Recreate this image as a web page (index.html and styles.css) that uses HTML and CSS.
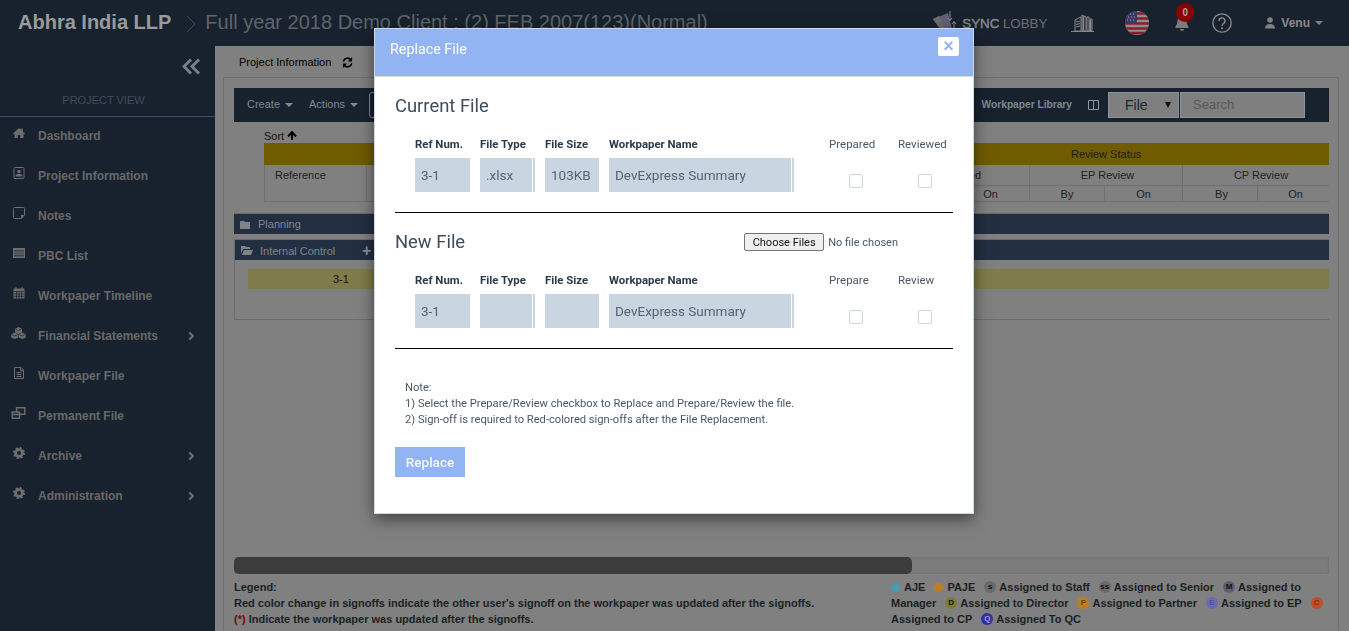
FILE: index.html
```html
<!DOCTYPE html>
<html lang="en">
<head>
<meta charset="utf-8">
<title>Replace File</title>
<link rel="stylesheet" href="styles.css">
</head>
<body>
<div class="app">
  <header class="topbar">
    <span class="brand">Abhra India LLP</span>
    <svg class="crumb" width="10" height="18" viewBox="0 0 10 18"><path d="M1 1l8 8-8 8" fill="none" stroke="#3d4650" stroke-width="1"/></svg>
    <span class="project">Full year 2018 Demo Client : (2) FEB 2007(123)(Normal)</span>
    <div class="top-right">
      <svg class="lobby-icon" width="27" height="22" viewBox="0 0 27 22"><path d="M0 8l10 14h10L15 2z" fill="#625f78"/><path d="M0 8l6-3 8 17h-4z" fill="#6e6e6e"/><path d="M17 0v9M15 7l2 2.500L19 7M21 20V11M19 13l2-2.500L23 13" fill="none" stroke="#8a8a8a" stroke-width="1"/></svg>
      <span class="lobby"><b>SYNC</b> LOBBY</span>
      <svg class="bld" width="23" height="20" viewBox="0 0 23 20"><path d="M0 18.500h23" stroke="#848484"/><path d="M4 18V7l6-3v14zM11 18V2l4 2v14zM16 18V4h2v14zM19 18V6h2v12z" fill="none" stroke="#8a8a8a"/><path d="M12.500 3v15M19.500 7v11" stroke="#8a8a8a" stroke-width="1.500"/><path d="M5 9l4-1M5 11.500l4-1M5 14l4-1" stroke="#8a8a8a"/></svg>
      <svg class="flag" width="24" height="24" viewBox="0 0 24 24"><defs><clipPath id="fc"><circle cx="12" cy="12" r="12"/></clipPath></defs><g clip-path="url(#fc)"><rect width="24" height="24" fill="#8d8d90"/><path d="M0 2.500h24M0 7.500h24M0 12.500h24M0 17.500h24M0 22h24" stroke="#8a1c2c" stroke-width="2.300"/><rect width="12" height="12" fill="#3a3a66"/><path d="M2 3h1M5 3h1M8 3h1M3 6h1M6 6h1M9 6h1M2 9h1M5 9h1M8 9h1" stroke="#a0a0b0" stroke-width="1"/></g></svg>
      <span class="bell-wrap">
        <svg width="14" height="16" viewBox="0 0 14 16"><path d="M7 1a4.500 4.500 0 0 0-4.500 4.500c0 4-2 5.500-2 6.500v1h13v-1c0-1-2-2.500-2-6.500A4.500 4.500 0 0 0 7 1zM5 14a2 2 0 0 0 4 0z" fill="#7c7c7c"/></svg>
        <span class="badge">0</span>
      </span>
      <svg class="help" width="20" height="20" viewBox="0 0 20 20"><circle cx="10" cy="10" r="9.200" fill="none" stroke="#8a8a8a" stroke-width="1.300"/><path d="M7 8a3 3 0 1 1 4.500 2.500c-1 .6-1.500 1-1.500 2.500" fill="none" stroke="#8a8a8a" stroke-width="1.400"/><circle cx="10" cy="15.300" r="1" fill="#8a8a8a"/></svg>
      <span class="user">
        <svg width="10" height="12" viewBox="0 0 10 12"><circle cx="5" cy="3" r="2.800" fill="#808080"/><path d="M0 11.500c0-3 2-4.500 5-4.500s5 1.500 5 4.500z" fill="#808080"/></svg>
        <span>Venu</span><i class="caret caret-user"></i>
      </span>
    </div>
  </header>

  <div class="layout">
    <aside class="sidebar">
      <div class="collapse">
        <svg width="19" height="17" viewBox="0 0 19 17"><path d="M9 1.500L2 8.500l7 7M17 1.500l-7 7 7 7" fill="none" stroke="#7b7f84" stroke-width="3"/></svg>
      </div>
      <div class="view-title">PROJECT VIEW</div>
      <nav class="nav">
        <a class="nav-item"><svg class="ni" viewBox="0 0 12 12"><path d="M6 1L0 6.500l.7.800L1.500 6.600V11h3.300V8h2.400v3h3.300V6.600l.8.700.7-.8-2-1.800V1.500H8.500v1.200z" fill="#6d6d6d"/></svg><span>Dashboard</span></a>
        <a class="nav-item"><svg class="ni" viewBox="0 0 12 12"><rect x="1" y="0.500" width="10" height="11" rx="1" fill="none" stroke="#6d6d6d"/><circle cx="6" cy="4.500" r="1.800" fill="#6d6d6d"/><path d="M2.500 9.500c0-2 1.500-2.800 3.500-2.800s3.500.8 3.500 2.800z" fill="#6d6d6d"/></svg><span>Project Information</span></a>
        <a class="nav-item"><svg class="ni" viewBox="0 0 12 12"><path d="M1.500.5h9a1 1 0 0 1 1 1V8l-3 3.500h-7a1 1 0 0 1-1-1v-9a1 1 0 0 1 1-1z" fill="none" stroke="#6d6d6d"/><path d="M8 8h3.500L8 11.500z" fill="#6d6d6d"/></svg><span>Notes</span></a>
        <a class="nav-item"><svg class="ni" viewBox="0 0 12 12"><rect x="0" y="1" width="12" height="10" fill="#6d6d6d"/><rect x="1" y="3" width="10" height="6.500" fill="#3a424c"/><path d="M1 5h10M1 7.200h10" stroke="#6d6d6d"/></svg><span>PBC List</span></a>
        <a class="nav-item"><svg class="ni" viewBox="0 0 12 12"><rect x="0.500" y="1.500" width="11" height="10" fill="#6d6d6d"/><path d="M3 0v3M9 0v3" stroke="#6d6d6d"/><path d="M1 4.500h10M3.500 4.500v6.500M6 4.500v6.500M8.500 4.500v6.500M1 7h10M1 9.300h10" stroke="#18222e" stroke-width=".7"/></svg><span>Workpaper Timeline</span></a>
        <a class="nav-item"><svg class="ni wide" viewBox="0 0 15 12"><path d="M7.500 0l3.500 1.700v3.500L7.500 7 4 5.200V1.700zM3.700 5.500l3.500 1.700v3.300L3.700 12 .2 10.500V7.200zM11.300 5.500l3.500 1.700v3.300L11.300 12l-3.500-1.500V7.200z" fill="#6d6d6d"/><path d="M4.500 2l3 1.500 3-1.500M.7 7.500l3 1.500 3-1.500M8.300 7.500l3 1.500 3-1.500" fill="none" stroke="#18222e" stroke-width=".7"/></svg><span class="grow">Financial Statements</span><i class="chev"></i></a>
        <a class="nav-item"><svg class="ni" viewBox="0 0 12 12"><path d="M1.500.5H8l2.500 2.500v8.500h-9z" fill="none" stroke="#6d6d6d"/><path d="M7.500 .5V3.500h3" fill="none" stroke="#6d6d6d"/><path d="M3.500 5.500h5M3.500 7.500h5M3.500 9.500h5" stroke="#6d6d6d"/></svg><span>Workpaper File</span></a>
        <a class="nav-item"><svg class="ni wide" viewBox="0 0 14 12"><path d="M5 5V.7h8.300v6.500H8M.7 5h7.300v6.300H.7zM.7 7.500H8" fill="none" stroke="#6d6d6d" stroke-width="1.400"/></svg><span>Permanent File</span></a>
        <a class="nav-item"><svg class="ni" viewBox="0 0 12 12"><circle cx="6" cy="6" r="3.400" fill="none" stroke="#6d6d6d" stroke-width="2.800"/><circle cx="6" cy="6" r="5" fill="none" stroke="#6d6d6d" stroke-width="2" stroke-dasharray="2 1.930"/></svg><span class="grow">Archive</span><i class="chev"></i></a>
        <a class="nav-item"><svg class="ni" viewBox="0 0 12 12"><circle cx="6" cy="6" r="3.400" fill="none" stroke="#6d6d6d" stroke-width="2.800"/><circle cx="6" cy="6" r="5" fill="none" stroke="#6d6d6d" stroke-width="2" stroke-dasharray="2 1.930"/></svg><span class="grow">Administration</span><i class="chev"></i></a>
      </nav>
    </aside>

    <main class="main">
      <div class="page-title">
        <span>Project Information</span>
        <svg width="11" height="11" viewBox="0 0 12 12"><path d="M1.500 5A4.600 4.600 0 0 1 10 3.500M10.500 7A4.600 4.600 0 0 1 2 8.500" fill="none" stroke="#000" stroke-width="1.700"/><path d="M11 0v5H6.500zM1 12V7h4.500z" fill="#000"/></svg>
      </div>
      <section class="panel">
        <div class="toolbar">
          <span class="tool">Create<i class="caret"></i></span>
          <span class="tool">Actions<i class="caret"></i></span>
          <span class="tool-box"></span>
          <span class="tool-lib">Workpaper Library</span>
          <svg class="cols" width="11" height="10" viewBox="0 0 11 10"><path d="M.5.500h10v9H.5zM5.500.500v9" fill="none" stroke="#8f979f"/></svg>
          <span class="select">File<i class="sel-arrow"></i></span>
          <span class="search">Search</span>
        </div>
        <div class="sort">Sort <svg width="10" height="9" viewBox="0 0 10 9"><path d="M5 9V2M1 5.500L5 1l4 4.500" fill="none" stroke="#000" stroke-width="1.900"/></svg></div>
        <div class="wp-table">
          <div class="band">Review Status</div>
          <div class="cell refcell">Reference</div>
          <div class="cell midcell"></div>
          <div class="cell g2 g-rev">Reviewed</div>
          <div class="cell g2 g-ep">EP Review</div>
          <div class="cell g2 g-cp last">CP Review</div>
          <div class="cell sm">By</div><div class="cell sm">On</div>
          <div class="cell sm">By</div><div class="cell sm">On</div>
          <div class="cell sm by-cp">By</div><div class="cell sm on-cp last">On</div>
        </div>
        <div class="group-bar first-bar">
          <svg width="10" height="9" viewBox="0 0 10 9"><path d="M0 1h4l1 1h5v7H0z" fill="#7f8387"/></svg>
          <span>Planning</span>
        </div>
        <div class="group">
          <div class="group-bar inner-bar">
            <svg width="12" height="9" viewBox="0 0 12 9"><path d="M0 0h4l1 1h4v2H2L0 8zM3 4h9l-2 5H1z" fill="#7f8387"/></svg>
            <span class="grow-label">Internal Control</span>
            <b class="plus">+</b>
          </div>
          <div class="yellow-row"><span>3-1</span></div>
        </div>
        <div class="hscroll"><div class="thumb"></div></div>
        <div class="legend">
          <div class="legend-left">
            <div>Legend:</div>
            <div>Red color change in signoffs indicate the other user's signoff on the workpaper was updated after the signoffs.</div>
            <div><span class="red">(*)</span> Indicate the workpaper was updated after the signoffs.</div>
          </div>
          <div class="legend-right">
            <div class="lg-line">
              <i class="dot aje"></i><span class="lg-t">AJE</span>
              <i class="dot paje"></i><span class="lg-t">PAJE</span>
              <i class="lt l-s">s</i><span class="lg-t">Assigned to Staff</span>
              <i class="lt l-s">ss</i><span class="lg-t">Assigned to Senior</span>
              <i class="lt l-m">M</i><span class="lg-t">Assigned to</span>
            </div>
            <div class="lg-line">
              <span class="lg-t">Manager</span>
              <i class="lt l-d">D</i><span class="lg-t">Assigned to Director</span>
              <i class="lt l-p">P</i><span class="lg-t">Assigned to Partner</span>
              <i class="lt l-e">E</i><span class="lg-t">Assigned to EP</span>
              <i class="lt l-c">C</i>
            </div>
            <div class="lg-line">
              <span class="lg-t">Assigned to CP</span>
              <i class="lt l-q">Q</i><span class="lg-t">Assigned To QC</span>
            </div>
          </div>
        </div>
      </section>
    </main>
  </div>
</div>

<div class="modal">
  <div class="modal-head">
    <span>Replace File</span>
    <button class="close" type="button">×</button>
  </div>
  <div class="modal-body">
    <h4 class="sec-title">Current File</h4>
    <div class="file-grid">
      <label class="lb">Ref Num.</label><label class="lb">File Type</label><label class="lb">File Size</label><label class="lb">Workpaper Name</label>
      <label class="lc">Prepared</label><label class="lc">Reviewed</label>
      <div class="inp">3-1</div><div class="inp edge">.xlsx</div><div class="inp">103KB</div><div class="inp edge">DevExpress Summary</div>
      <div class="chk-cell"><span class="chk"></span></div><div class="chk-cell"><span class="chk"></span></div>
    </div>
    <hr class="rule">
    <div class="new-head">
      <h4 class="sec-title">New File</h4>
      <div class="file-pick"><button class="choose" type="button">Choose Files</button><span>No file chosen</span></div>
    </div>
    <div class="file-grid">
      <label class="lb">Ref Num.</label><label class="lb">File Type</label><label class="lb">File Size</label><label class="lb">Workpaper Name</label>
      <label class="lc">Prepare</label><label class="lc">Review</label>
      <div class="inp">3-1</div><div class="inp edge"></div><div class="inp"></div><div class="inp edge">DevExpress Summary</div>
      <div class="chk-cell"><span class="chk"></span></div><div class="chk-cell"><span class="chk"></span></div>
    </div>
    <hr class="rule">
    <div class="note">
      <div>Note:</div>
      <div>1) Select the Prepare/Review checkbox to Replace and Prepare/Review the file.</div>
      <div>2) Sign-off is required to Red-colored sign-offs after the File Replacement.</div>
    </div>
    <button class="replace" type="button">Replace</button>
  </div>
</div>
</body>
</html>
```
FILE: styles.css
```css
* { box-sizing: border-box; }
html, body { margin: 0; height: 100%; overflow: hidden; }
body { font-family: "Liberation Sans", Arial, sans-serif; background: #808080; color: #1c1c1c; }
i { font-style: normal; }

.app { height: 631px; display: flex; flex-direction: column; }

.topbar { height: 46px; flex: none; background: #18222e; display: flex; align-items: center; padding-left: 18px; white-space: nowrap; }
.brand { font-size: 20px; font-weight: 700; color: #9a9a9a; margin-bottom: 2px; }
.crumb { margin: 2px 9px 0 15px; }
.project { font-size: 20px; color: #5e646a; margin-bottom: 2px; }
.top-right { margin-left: auto; display: flex; align-items: center; padding-right: 26px; }
.lobby-icon { margin: -2px 2px 0 0; }
.lobby { font-size: 13.300px; color: #6e6e6e; width: 85px; }
.lobby b { color: #8a8a8a; font-weight: 400; -webkit-text-stroke: .4px #8a8a8a; }
.bld { margin: 0 0 0 24px; }
.flag { margin-left: 31px; }
.bell-wrap { position: relative; margin-left: 26px; width: 14px; height: 16px; }
.badge { position: absolute; left: 1px; top: -12px; width: 18px; height: 19px; border-radius: 50%; background: #8a0000; color: #b0a0a0; font-size: 10px; font-weight: 700; text-align: center; line-height: 19px; }
.help { margin-left: 23px; }
.user { display: flex; align-items: center; margin-left: 33px; font-size: 12px; font-weight: 700; color: #8a8a8a; }
.user span { margin-left: 6px; }
.caret { display: inline-block; margin-left: 5px; border: 4px solid transparent; border-top-color: #808a94; border-bottom: 0; vertical-align: middle; }
.caret-user { border-top-color: #808080; }

.layout { flex: 1; display: flex; min-height: 0; }
.sidebar { width: 215px; flex: none; background: #18222e; }
.collapse { height: 32px; display: flex; justify-content: flex-end; padding: 12px 14px 0 0; }
.view-title { height: 39px; border-bottom: 1px solid #3d4f63; font-size: 11px; color: #3e4c5c; text-align: center; padding: 16px 8px 0 0; margin-bottom: -1px; }
.nav { display: flex; flex-direction: column; }
.nav-item { height: 40px; display: flex; align-items: center; padding: 0 20px 0 13px; font-size: 12px; font-weight: 700; color: #686868; }
.ni { width: 12px; height: 12px; margin: -6px 13px 0 0; flex: none; }
.ni.wide { width: 15px; margin: -6px 12px 0 -2px; }
.grow { flex: 1; }
.chev { width: 6px; height: 6px; border-top: 2px solid #6d6d6d; border-right: 2px solid #6d6d6d; transform: rotate(45deg); margin-right: 2px; }

.main { flex: 1; min-width: 0; padding: 0 10px 0 8px; display: flex; flex-direction: column; }
.page-title { height: 31px; flex: none; display: flex; align-items: center; padding: 1px 0 0 16px; font-size: 11px; color: #000; }
.page-title svg { margin-left: 11px; }
.panel { flex: 1; min-height: 0; border: 1px solid #6e6e6e; border-bottom: 0; padding: 10px 9px 0 10px; display: flex; flex-direction: column; overflow: hidden; }

.toolbar { height: 34px; flex: none; background: #18222e; display: flex; align-items: center; padding-left: 13px; font-size: 11px; color: #7d8893; }
.tool { margin: 0 16px 2px 0; white-space: nowrap; }
.tool-box { width: 20px; height: 26px; border: 1px solid #7d8893; border-radius: 3px; margin-left: -5px; }
.tool-lib { margin: 0 0 2px auto; font-weight: 700; font-size: 10.200px; }
.cols { margin-left: 16px; }
.select { width: 71px; height: 26px; margin-left: 9px; background: #7f7f7f; border: 1px solid #8b9299; color: #202830; font-size: 14px; line-height: 24px; padding-left: 16px; position: relative; }
.sel-arrow { position: absolute; right: 7px; top: 9px; border: 3.500px solid transparent; border-top: 6px solid #111; border-bottom: 0; }
.search { width: 125px; height: 26px; margin: 0 24px 0 1px; background: #7f7f7f; border: 1px solid #8b9299; color: #555a5f; font-size: 13px; line-height: 24px; padding-left: 12px; }

.sort { height: 21px; flex: none; padding: 9px 0 0 30px; font-size: 11px; line-height: 11px; color: #111; white-space: nowrap; }
.wp-table { flex: none; margin-left: 30px; display: grid; grid-template-columns: 103px 510px 75px 78px 75px 78px 75px 71px; grid-template-rows: 22px 21px 16px; font-size: 11px; color: #222; }
.band { grid-column: 1 / -1; background: #6f5c00; color: #1e1e10; line-height: 22px; padding-left: 807px; }
.cell { border-right: 1px solid #707070; border-bottom: 1px solid #707070; text-align: center; line-height: 20px; }
.refcell { grid-row: 2 / 4; text-align: left; padding-left: 10px; line-height: 21px; border-left: 1px solid #707070; }
.midcell { grid-row: 2 / 4; }
.g2 { grid-column: span 2; }
.sm { line-height: 17px; }
.last { border-right: 0; }
.g-rev { padding-left: 8px; }
.g-ep { padding-left: 3px; }
.g-cp { padding-left: 10px; }
.by-cp { padding-left: 3px; }
.on-cp { padding-left: 4px; }

.group-bar { height: 21px; flex: none; background: #222f40; border-top: 1px solid #6a6a6a; display: flex; align-items: center; padding-left: 6px; font-size: 11px; color: #7d8893; }
.group-bar svg { margin-right: 8px; }
.first-bar { margin-top: 11px; }
.group { flex: none; margin-top: 5px; height: 81px; border: 1px solid #6a6a6a; border-right: 0; }
.inner-bar { border-top: 0; height: 20px; padding-top: 1px; }
.inner-bar svg { margin-right: 7px; }
.grow-label { width: 102px; }
.plus { color: #8e8e8e; font-size: 16px; line-height: 14px; }
.yellow-row { margin: 9px 0 0 13px; height: 20px; background: #7f7b4a; font-size: 11px; line-height: 20px; color: #111; padding-left: 85px; }

.hscroll { height: 17px; flex: none; margin-top: 237px; background: #7c7c7c; box-shadow: inset 0 0 3px #6a6a6a; }
.thumb { width: 678px; height: 17px; background: #3c3c3c; border-radius: 5px; }

.legend { flex: none; display: flex; justify-content: space-between; padding-top: 5px; font-size: 11px; font-weight: 700; line-height: 16px; color: #1a1f24; }
.legend-left { white-space: nowrap; width: 600px; }
.red { color: #7a0010; }
.legend-right { width: 438px; white-space: nowrap; }
.lg-line { display: flex; align-items: center; height: 16px; }
.lg-t { margin-right: 9px; }
.dot { flex: none; width: 9px; height: 9px; border-radius: 50%; margin-right: 4px; }
.aje { background: #4a9ab0; }
.paje { background: #c07d1f; }
.lt { flex: none; width: 12px; height: 12px; border-radius: 50%; margin-right: 3px; font-size: 8px; font-weight: 700; line-height: 12px; text-align: center; }
.l-s { background: #6a6a6a; color: #111; }
.l-m { background: #5f5f70; color: #111; }
.l-d { background: #7f7b30; color: #111; }
.l-p { background: #c07d1f; color: #5a4a20; }
.l-e { background: #6a6ab0; color: #5050a0; }
.l-c { background: #c0502a; color: #80301a; }
.l-q { background: #3030a0; color: #a0a0d0; }

.modal { position: fixed; left: 374px; top: 28px; width: 600px; height: 486px; background: #fff; border: 1px solid #cdd8e6; box-shadow: 0 5px 15px rgba(0,0,0,.5); font-family: Roboto, "Liberation Sans", sans-serif; color: #3b4a5a; }
.modal-head { height: 48px; background: #92b4f2; border-bottom: 1px solid #dcdcdc; display: flex; justify-content: space-between; padding: 8px 14px 0 15px; color: #fff; font-size: 14.300px; }
.modal-head span { margin-top: 4px; }
.close { width: 21px; height: 19px; padding: 0; border: 0; border-radius: 2px; background: #fff; color: #92b4f2; font-size: 18px; font-weight: 700; line-height: 19px; font-family: "Liberation Sans", sans-serif; }
.modal-body { padding: 17px 20px 0; }
.sec-title { margin: 0; font-size: 18.400px; font-weight: 400; line-height: 24px; color: #3f4d5c; }
.file-grid { display: grid; grid-template-columns: 55px 55px 54px 185px 59px 60px; grid-template-rows: 14px 34px; column-gap: 10px; row-gap: 7px; padding-left: 20px; margin-top: 19px; }
.lb { font-size: 11.400px; font-weight: 700; line-height: 14px; color: #2b3a4c; white-space: nowrap; }
.lc { font-size: 11.500px; line-height: 14px; color: #4a5765; white-space: nowrap; padding-left: 25px; }
.inp { background: #c9d5e1; font-size: 13.500px; line-height: 34px; padding-left: 6px; color: #566472; white-space: nowrap; overflow: hidden; }
.edge { box-shadow: inset -2px 0 0 #c9d5e1, inset -3px 0 0 #fff; }
.chk-cell { padding: 16px 0 0 45px; }
.chk { display: block; width: 14px; height: 14px; border: 1px solid #c9d5e1; border-radius: 2px; background: #fff; }
.rule { margin: 20px 0 0; border: 0; border-top: 1px solid #000; }
.new-head { display: flex; justify-content: space-between; align-items: center; margin-top: 17px; height: 24px; padding-right: 55px; }
.new-head + .file-grid { margin-top: 19px; }
.file-pick { display: flex; align-items: center; font-size: 11px; color: #4a5765; }
.choose { width: 80px; height: 18px; padding: 0; margin-right: 4px; background: #efefef; border: 1px solid #767676; border-radius: 2px; font-family: Roboto, "Liberation Sans", sans-serif; font-size: 11px; color: #111; }
.note { margin-top: 31px; padding-left: 10px; font-size: 11.150px; line-height: 16px; color: #4a5765; white-space: nowrap; }
.replace { display: block; width: 70px; height: 30px; margin-top: 19px; padding: 0; border: 0; background: #92b4f2; color: #f4f7fd; font-family: Roboto, "Liberation Sans", sans-serif; font-size: 13.500px; font-weight: 500; }
```
